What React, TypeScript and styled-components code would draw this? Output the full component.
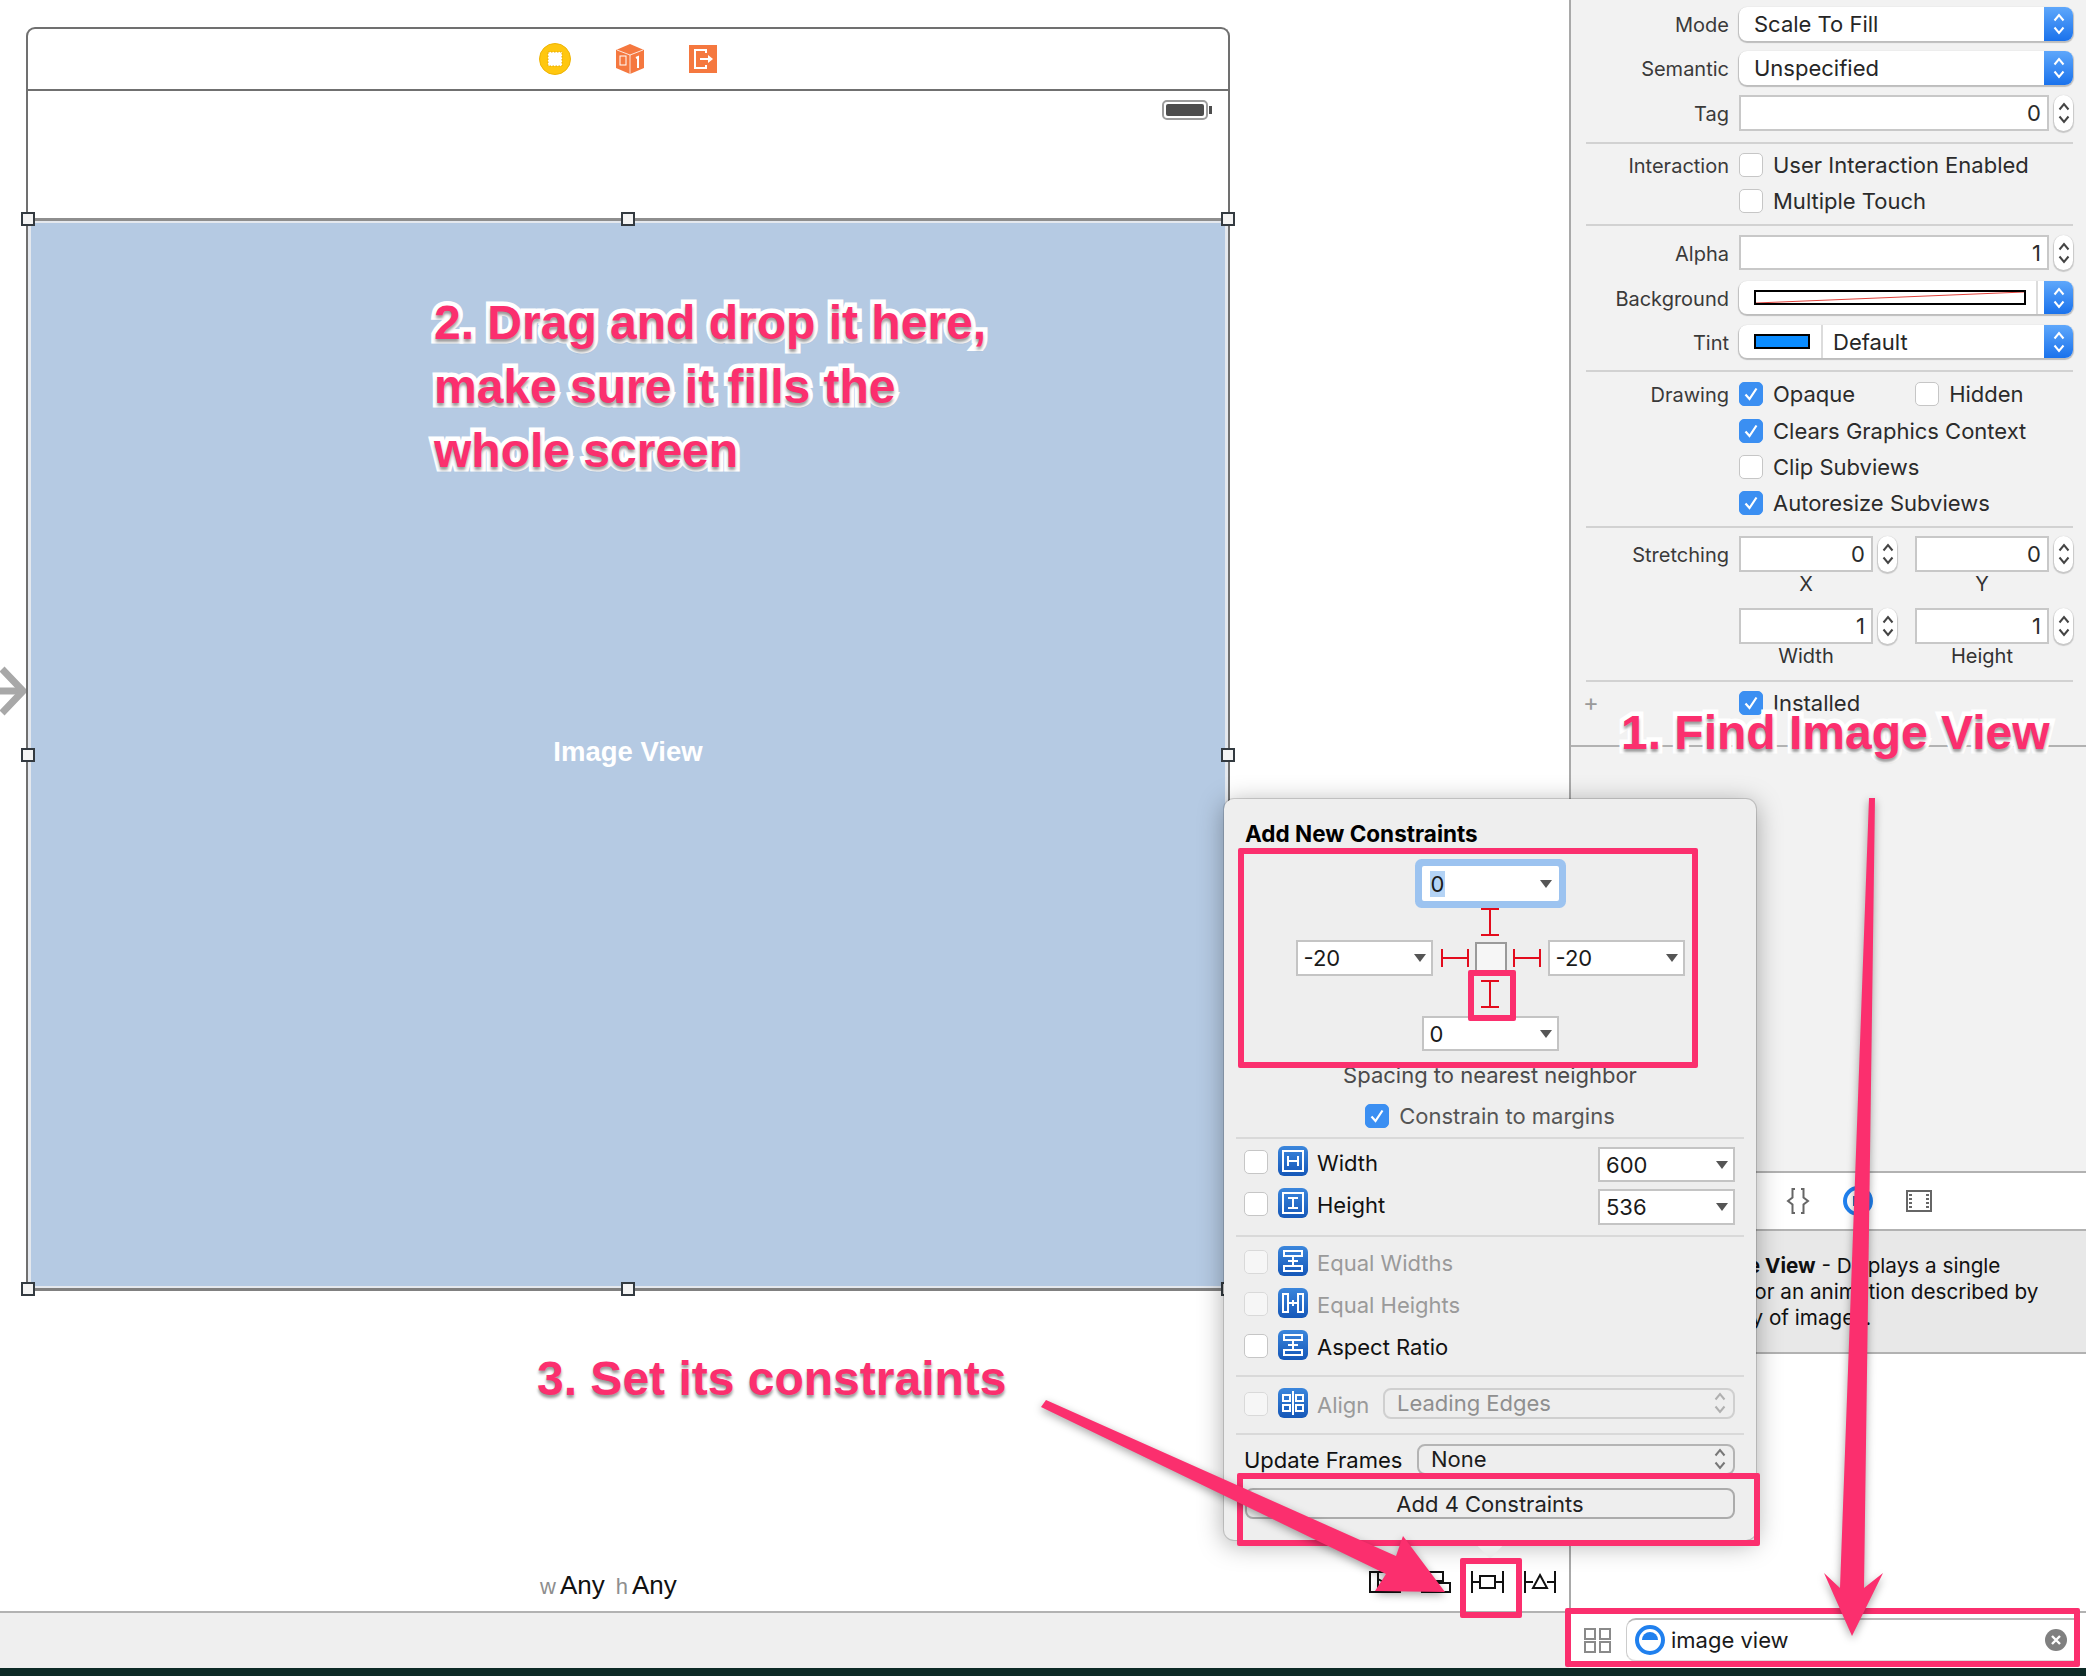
import React from "react";
import styled, { createGlobalStyle } from "styled-components";

const PINK = "#fb2f6e";
const UI_FONT = `Inter, "Liberation Sans", sans-serif`;

const GlobalStyle = createGlobalStyle`
  html, body {
    margin: 0;
    padding: 0;
    background: #ffffff;
  }
  body {
    font-family: ${UI_FONT};
    font-size: 22px;
    color: #2b2b2b;
  }
`;

const Page = styled.div`
  position: relative;
  width: 2086px;
  height: 1676px;
  overflow: hidden;
  display: flex;
  flex-direction: column;
`;

const Main = styled.div`
  display: flex;
  height: 1611px;
`;

/* storyboard canvas */
const Canvas = styled.div`
  position: relative;
  flex: 1;
  display: flex;
  flex-direction: column;
  padding: 27px 0 0 26px;
  background: #ffffff;
`;

const SegueArrow = styled.svg`
  position: absolute;
  left: 0;
  top: 666px;
`;

const Scene = styled.div`
  width: 1204px;
  height: 1264px;
  display: flex;
  flex-direction: column;
  box-sizing: border-box;
  border: 2px solid #707070;
  border-bottom: 0;
  border-radius: 9px 9px 0 0;
`;

const SceneHeader = styled.div`
  height: 60px;
  display: flex;
  align-items: center;
  justify-content: center;
  gap: 45px;
  border-bottom: 2px solid #707070;
`;

const StatusArea = styled.div`
  height: 127px;
  display: flex;
  justify-content: flex-end;
  padding: 9px 16px 0 0;
  box-sizing: border-box;
`;

const ImageView = styled.div`
  position: relative;
  flex: 1;
  display: flex;
  align-items: center;
  justify-content: center;
  background: #b5cae3;
  border-top: 3px solid #8e8e8e;
  border-bottom: 3px solid #808080;
  box-shadow: inset 3px 2px 0 #e4e8ee, inset -3px -2px 0 #e4e8ee;
  color: #ffffff;
  font-family: "Liberation Sans", sans-serif;
  font-weight: 700;
  font-size: 27.5px;
  padding-bottom: 6px;
  box-sizing: border-box;
`;

const Handle = styled.span<{ $h: "left" | "mid" | "right"; $v: "top" | "mid" | "bottom" }>`
  position: absolute;
  width: 10px;
  height: 10px;
  background: #f4f4f4;
  border: 2px solid #333a40;
  ${({ $h }) => ($h === "left" ? "left: -7px;" : $h === "right" ? "right: -7px;" : "left: calc(50% - 7px);")}
  ${({ $v }) => ($v === "top" ? "top: -9px;" : $v === "bottom" ? "bottom: -8px;" : "top: calc(50% - 7px);")}
`;

const CanvasToolbar = styled.div`
  position: absolute;
  left: 0;
  right: 0;
  bottom: 10px;
  display: flex;
  align-items: center;
  justify-content: space-between;
  padding: 0 13px 0 540px;
  font-family: "Liberation Sans", sans-serif;
`;

const SizeClass = styled.div`
  font-size: 26px;
  color: #111111;
  display: flex;
  gap: 11px;
  padding-top: 8px;
`;

const SizePrefix = styled.span`
  font-size: 22px;
  color: #8e8e8e;
  margin-right: 4px;
`;

const ToolIcons = styled.div`
  display: flex;
  align-items: center;
  gap: 20px;
`;

/* inspector */
const Inspector = styled.div`
  width: 517px;
  box-sizing: border-box;
  border-left: 2px solid #a9a9a9;
  display: flex;
  flex-direction: column;
  background: #f2f2f2;
`;

const InspectorTop = styled.div`
  height: 747px;
  box-sizing: border-box;
  padding-right: 13px;
  border-bottom: 2px solid #b2b2b2;
`;

const Section = styled.div<{ $top: number; $gap: number; $bottom: number; $last?: boolean }>`
  display: flex;
  flex-direction: column;
  gap: ${({ $gap }) => $gap}px;
  padding-top: ${({ $top }) => $top}px;
  padding-bottom: ${({ $bottom }) => $bottom}px;
  margin-left: 15px;
  border-bottom: ${({ $last }) => ($last ? "0" : "2px solid #d2d2d2")};
`;

const Row = styled.div`
  display: flex;
  align-items: center;
  position: relative;
`;

const RowLabel = styled.div`
  position: relative;
  top: 1px;
  width: 143px;
  margin-right: 10px;
  flex: none;
  text-align: right;
  color: #3a3a3a;
  font-size: 20px;
  line-height: 24px;
`;

const SelectBox = styled.div<{ $h?: number }>`
  flex: 1;
  height: ${({ $h }) => $h ?? 34}px;
  box-sizing: border-box;
  display: flex;
  align-items: center;
  background: #ffffff;
  border-radius: 8px;
  overflow: hidden;
  box-shadow: 0 1px 1px 1px rgba(0, 0, 0, 0.22);
  color: #262626;
`;

const SelectText = styled.div<{ $pad: number }>`
  flex: 1;
  padding-left: ${({ $pad }) => $pad}px;
`;

const BlueCap = styled.div`
  width: 29px;
  flex: none;
  height: 100%;
  display: flex;
  align-items: center;
  justify-content: center;
  background: linear-gradient(#5ea7fb, #1a72ec);
`;

const NumberField = styled.div<{ $w?: number; $h?: number }>`
  ${({ $w }) => ($w ? `width: ${$w}px; flex: none;` : "flex: 1;")}
  height: ${({ $h }) => $h ?? 36}px;
  box-sizing: border-box;
  background: #ffffff;
  border: 2px solid #c8c8c8;
  padding-right: 6px;
  text-align: right;
  line-height: ${({ $h }) => ($h ?? 36) - 3}px;
  color: #2b2b2b;
`;

const Stepper = styled.div`
  width: 19px;
  flex: none;
  align-self: stretch;
  margin-left: 5px;
  display: flex;
  align-items: center;
  justify-content: center;
  background: #ffffff;
  border-radius: 10px;
  box-shadow: 0 1px 1px 1px rgba(0, 0, 0, 0.18);
`;

const CheckRow = styled.div<{ $indent?: boolean }>`
  display: flex;
  align-items: center;
  gap: 10px;
  height: 24px;
  line-height: 24px;
  color: #2b2b2b;
  ${({ $indent }) => ($indent ? "margin-left: 153px;" : "")}
`;

const CheckBox = styled.div<{ $on?: boolean; $off?: boolean }>`
  width: 24px;
  height: 24px;
  flex: none;
  box-sizing: border-box;
  display: flex;
  align-items: center;
  justify-content: center;
  border-radius: 5px;
  background: ${({ $on }) => ($on ? "#3b8ff2" : "#ffffff")};
  border: 1px solid ${({ $on }) => ($on ? "#3b8ff2" : "#c6c6c6")};
  opacity: ${({ $off }) => ($off ? 0.5 : 1)};
`;

const DrawingExtra = styled.div`
  display: flex;
  align-items: center;
  gap: 10px;
  margin-left: 60px;
`;

const Swatch = styled.div<{ $w: number; $fill: string }>`
  width: ${({ $w }) => $w}px;
  height: 15px;
  flex: none;
  margin-left: 15px;
  box-sizing: border-box;
  border: 2px solid #000000;
  background: ${({ $fill }) => $fill};
`;

const Separator = styled.div<{ $ml: number }>`
  width: 2px;
  height: 100%;
  margin-left: ${({ $ml }) => $ml}px;
  background: #dcdcdc;
  flex: none;
`;

const PairRow = styled.div`
  display: flex;
  align-items: center;
`;

const PairCell = styled.div`
  width: 158px;
  display: flex;
  align-items: center;
  margin-right: 18px;
  &:last-child {
    margin-right: 0;
  }
`;

const PairLabel = styled.div`
  width: 134px;
  text-align: center;
  font-size: 20px;
  line-height: 24px;
  color: #333333;
`;

const PairLabels = styled.div<{ $mb: number }>`
  display: flex;
  gap: 42px;
  margin: 0 0 ${({ $mb }) => $mb}px 153px;
  height: 24px;
`;

const PlusMark = styled.div`
  position: absolute;
  left: -3px;
  top: 0;
  color: #9a9a9a;
  font-size: 24px;
  line-height: 24px;
`;

const TabStrip = styled.div`
  margin-top: 424px;
  height: 56px;
  flex: none;
  background: #ffffff;
  border-top: 2px solid #b2b2b2;
  border-bottom: 2px solid #b2b2b2;
  display: flex;
  align-items: center;
  padding-left: 215px;
  gap: 33px;
`;

const Description = styled.div`
  height: 123px;
  flex: none;
  box-sizing: border-box;
  background: #e8e8e8;
  border-bottom: 2px solid #b2b2b2;
  padding: 22px 0 0 112px;
  font-size: 20.7px;
  line-height: 26px;
  color: #111111;
  white-space: nowrap;
`;

const DescriptionLead = styled.span`
  margin-left: 15px;
`;

const Remaining = styled.div`
  flex: 1;
  background: #ffffff;
`;

/* bottom bars */
const BottomBar = styled.div`
  height: 57px;
  flex: none;
  box-sizing: border-box;
  display: flex;
  border-top: 2px solid #b2b2b2;
`;

const BarLeft = styled.div`
  flex: 1;
  background: #efefef;
`;

const BarRight = styled.div`
  width: 517px;
  flex: none;
  box-sizing: border-box;
  background: #ffffff;
  display: flex;
  align-items: flex-start;
  padding: 5px 8px 0 15px;
  gap: 15px;
`;

const GridIcon = styled.svg`
  margin-top: 10px;
  flex: none;
`;

const SearchField = styled.div`
  flex: 1;
  height: 44px;
  box-sizing: border-box;
  border-top: 2px solid #b8b8b8;
  border-left: 1px solid #cccccc;
  border-bottom: 2px solid #dddddd;
  border-radius: 10px 0 0 10px;
  display: flex;
  align-items: center;
  padding: 0 11px 0 8px;
  gap: 6px;
  color: #1a1a1a;
`;

const SearchText = styled.div`
  flex: 1;
`;

const DarkBand = styled.div`
  flex: 1;
  background: #0d2a26;
`;

/* constraints popover */
const Popover = styled.div`
  position: absolute;
  left: 1224px;
  top: 799px;
  width: 532px;
  height: 741px;
  box-sizing: border-box;
  display: flex;
  flex-direction: column;
  background: #eeeeee;
  border-radius: 10px;
  box-shadow: 0 0 0 1px rgba(0, 0, 0, 0.14), 0 4px 26px rgba(0, 0, 0, 0.34);
  padding: 22px 12px 0;
  color: #111111;
`;

const PopoverTip = styled.div`
  position: absolute;
  left: 248px;
  bottom: -19px;
  width: 0;
  height: 0;
  border-left: 18px solid transparent;
  border-right: 18px solid transparent;
  border-top: 19px solid #ececec;
`;

const PopoverTitle = styled.div`
  font-weight: 700;
  font-size: 22.5px;
  line-height: 26px;
  padding-left: 9px;
  color: #000000;
`;

const PinPad = styled.div`
  display: flex;
  flex-direction: column;
  align-items: center;
  margin-top: 19px;
`;

const PinSelect = styled.div<{ $focus?: boolean; $h?: number }>`
  width: 137px;
  height: ${({ $h }) => $h ?? 35}px;
  flex: none;
  box-sizing: border-box;
  display: flex;
  align-items: center;
  justify-content: space-between;
  padding: 0 5px 0 6px;
  background: #ffffff;
  border: 2px solid ${({ $focus }) => ($focus ? "#ffffff" : "#c4c4c4")};
  color: #1a1a1a;
  ${({ $focus }) => ($focus ? "box-shadow: 0 0 0 7px #9cc3f0; border-radius: 2px;" : "")}
`;

const PinValue = styled.span<{ $selected?: boolean }>`
  background: ${({ $selected }) => ($selected ? "#b4d3f5" : "transparent")};
  padding: 0 1px;
`;

const Caret = styled.span`
  width: 0;
  height: 0;
  border-left: 6px solid transparent;
  border-right: 6px solid transparent;
  border-top: 8px solid #555555;
`;

const PinMiddle = styled.div`
  display: flex;
  align-items: center;
  margin: 4px 0;
`;

const Strut = styled.svg<{ $mt: number; $mb: number }>`
  display: block;
  margin-top: ${({ $mt }) => $mt}px;
  margin-bottom: ${({ $mb }) => $mb}px;
`;

const BeamGap = styled.span<{ $w: number }>`
  width: ${({ $w }) => $w}px;
`;

const PinSquare = styled.div`
  width: 32px;
  height: 33px;
  box-sizing: border-box;
  margin: 0 6px;
  background: #f6f6f6;
  border: 2px solid #9a9a9a;
`;

const HintText = styled.div`
  margin-top: 11px;
  line-height: 26px;
  text-align: center;
  color: #4a4a4a;
`;

const ConstrainRow = styled.div`
  margin-top: 16px;
  height: 24px;
  display: flex;
  align-items: center;
  justify-content: center;
  gap: 10px;
  color: #555555;
`;

const PopDivider = styled.div<{ $mt: number }>`
  height: 2px;
  flex: none;
  margin-top: ${({ $mt }) => $mt}px;
  background: #d9d9d9;
`;

const PopRow = styled.div<{ $mt: number }>`
  height: 30px;
  flex: none;
  margin-top: ${({ $mt }) => $mt}px;
  display: flex;
  align-items: center;
  padding: 0 9px 0 8px;
  & > :first-child {
    margin-top: 2px;
  }
`;

const PopLabel = styled.div<{ $dim?: boolean; $fixed?: boolean }>`
  margin-left: 9px;
  padding-top: 3px;
  flex: ${({ $fixed }) => ($fixed ? "none" : "1")};
  color: ${({ $dim }) => ($dim ? "#9a9a9a" : "#111111")};
`;

const RowIcon = styled.svg`
  margin-left: 10px;
  flex: none;
`;

const SizeSelectWrap = styled.div`
  align-self: flex-start;
  margin-top: 1px;
`;

const PopUpButton = styled.div<{ $w: number; $dim?: boolean }>`
  width: ${({ $w }) => $w}px;
  height: 31px;
  flex: none;
  margin-left: auto;
  box-sizing: border-box;
  display: flex;
  align-items: center;
  justify-content: space-between;
  padding: 0 6px 0 12px;
  border: 2px solid ${({ $dim }) => ($dim ? "#cfcfcf" : "#b4b4b4")};
  border-radius: 8px;
  color: ${({ $dim }) => ($dim ? "#8f8f8f" : "#1c1c1c")};
`;

const UpdateLabel = styled.div`
  flex: none;
`;

const AddButton = styled.div`
  margin: 14px 9px 0;
  height: 31px;
  flex: none;
  box-sizing: border-box;
  border: 2px solid #ababab;
  border-radius: 8px;
  display: flex;
  align-items: center;
  justify-content: center;
  color: #222222;
`;

/* annotations drawn over the screenshot */
const Callout = styled.div<{ $x: number; $y: number }>`
  position: absolute;
  left: ${({ $x }) => $x}px;
  top: ${({ $y }) => $y}px;
  font-family: "Liberation Sans", sans-serif;
  font-weight: 700;
  font-size: 48px;
  line-height: 64px;
  white-space: nowrap;
  color: ${PINK};
  -webkit-text-stroke: 9px #ffffff;
  paint-order: stroke fill;
  text-shadow: 0 3px 3px rgba(0, 0, 0, 0.4);
`;

const PinkFrame = styled.div<{ $x: number; $y: number; $w: number; $h: number }>`
  position: absolute;
  left: ${({ $x }) => $x}px;
  top: ${({ $y }) => $y}px;
  width: ${({ $w }) => $w}px;
  height: ${({ $h }) => $h}px;
  box-sizing: border-box;
  border: 6px solid ${PINK};
  border-radius: 2px;
`;

const ArrowLayer = styled.svg`
  position: absolute;
  left: 0;
  top: 0;
  pointer-events: none;
  filter: drop-shadow(0 3px 4px rgba(0, 0, 0, 0.35));
`;

const Chevrons = ({ color }: { color: string }) => (
  <svg width="14" height="26" viewBox="0 0 14 26" fill="none" stroke={color} strokeWidth={2}>
    <path d="M2.5 9.5 7 4l4.5 5.5" />
    <path d="M2.5 16.5 7 22l4.5-5.5" />
  </svg>
);

const Check = () => (
  <svg width="16" height="16" viewBox="0 0 16 16" fill="none" stroke="#ffffff" strokeWidth={2.2}>
    <path d="M2.5 8.5 6.5 13 13.5 2.5" />
  </svg>
);

const Box = ({ on, off }: { on?: boolean; off?: boolean }) => (
  <CheckBox $on={on} $off={off}>{on && <Check />}</CheckBox>
);

const IconBase = ({ children }: { children: React.ReactNode }) => (
  <RowIcon width="30" height="30" viewBox="0 0 30 30" fill="none" stroke="#ffffff" strokeWidth={2}>
    <defs>
      <linearGradient id="blueIcon" x1="0" y1="0" x2="0" y2="1">
        <stop offset="0" stopColor="#3b86dc" />
        <stop offset="1" stopColor="#1557b8" />
      </linearGradient>
    </defs>
    <rect x="0" y="0" width="30" height="30" rx="6" fill="url(#blueIcon)" stroke="none" />
    {children}
  </RowIcon>
);

const WidthIcon = () => (
  <IconBase>
    <rect x="5" y="5" width="20" height="20" />
    <path d="M10 10v10M20 10v10M10 15h10" />
  </IconBase>
);
const HeightIcon = () => (
  <IconBase>
    <rect x="5" y="5" width="20" height="20" />
    <path d="M10 10h10M10 20h10M15 10v10" />
  </IconBase>
);
const EqualWidthsIcon = () => (
  <IconBase>
    <rect x="6" y="5" width="18" height="5" />
    <rect x="6" y="20" width="18" height="5" />
    <path d="M15 10v10M10 15h10" />
  </IconBase>
);
const EqualHeightsIcon = () => (
  <IconBase>
    <rect x="5" y="6" width="5" height="18" />
    <rect x="20" y="6" width="5" height="18" />
    <path d="M10 15h10M15 12v6" />
  </IconBase>
);
const AlignIcon = () => (
  <IconBase>
    <path d="M15 3v24" />
    <rect x="5" y="7" width="7" height="6" />
    <rect x="18" y="7" width="7" height="6" />
    <rect x="5" y="17" width="7" height="6" />
    <rect x="18" y="17" width="7" height="6" />
  </IconBase>
);

const HBeam = () => (
  <svg width="28" height="20" viewBox="0 0 28 20" stroke="#e30b1c" strokeWidth={2} fill="none">
    <path d="M1 1v18M27 1v18M1 10h26" />
  </svg>
);

const VBeam = ({ mt, mb }: { mt: number; mb: number }) => (
  <Strut $mt={mt} $mb={mb} width="20" height="28" viewBox="0 0 20 28" stroke="#e30b1c" strokeWidth={2} fill="none">
    <path d="M1 1h18M1 27h18M10 1v26" />
  </Strut>
);

const StoryIcons = () => (
  <>
    <svg width="32" height="32" viewBox="0 0 32 32">
      <circle cx="16" cy="16" r="15.5" fill="#ffc70f" stroke="#eeb405" />
      <rect x="9" y="9" width="14" height="14" fill="#ffffff" stroke="#e5a800" strokeDasharray="1.5 1.5" />
    </svg>
    <svg width="28" height="30" viewBox="0 0 28 30">
      <path d="M14 0 28 6v18L14 30 0 24V6Z" fill="#f5783f" />
      <path d="M14 11 27 6M14 11 1 6M14 11v19" stroke="#ffffff" strokeWidth="0.8" fill="none" />
      <rect x="4" y="12" width="6" height="9" fill="none" stroke="#ffffff" strokeWidth="1" />
      <path d="M20 14l2-1v11" stroke="#ffffff" strokeWidth="2" fill="none" />
    </svg>
    <svg width="28" height="28" viewBox="0 0 28 28">
      <rect width="28" height="28" fill="#f5783f" />
      <path d="M17 8V5H6v18h11v-3" stroke="#ffffff" strokeWidth="2" fill="none" />
      <path d="M11 14h9" stroke="#ffffff" strokeWidth="2" />
      <path d="M19 10l5 4-5 4Z" fill="#ffffff" />
    </svg>
  </>
);

const Battery = () => (
  <svg width="50" height="20" viewBox="0 0 50 20">
    <rect x="1" y="1" width="44" height="18" rx="4" fill="#ffffff" stroke="#9c9c9c" strokeWidth="2" />
    <rect x="4" y="4" width="38" height="12" rx="2" fill="#4d4d4d" />
    <rect x="47" y="6" width="3" height="8" fill="#4d4d4d" />
  </svg>
);

const ToolIcon = ({ children, w }: { children: React.ReactNode; w: number }) => (
  <svg width={w} height="22" viewBox={`0 0 ${w} 22`} stroke="#111111" strokeWidth={2} fill="none">
    {children}
  </svg>
);

const App = () => (
  <Page>
    <GlobalStyle />
    <Main>
      <Canvas>
        <SegueArrow width="26" height="50" viewBox="0 0 26 50" fill="none" stroke="#a8a8a8">
          <path d="M0 25h22" strokeWidth="7" />
          <path d="M2 3 23 25 2 47" strokeWidth="7" />
        </SegueArrow>
        <Scene>
          <SceneHeader>
            <StoryIcons />
          </SceneHeader>
          <StatusArea>
            <Battery />
          </StatusArea>
          <ImageView>
            Image View
            <Handle $h="left" $v="top" />
            <Handle $h="mid" $v="top" />
            <Handle $h="right" $v="top" />
            <Handle $h="left" $v="mid" />
            <Handle $h="right" $v="mid" />
            <Handle $h="left" $v="bottom" />
            <Handle $h="mid" $v="bottom" />
            <Handle $h="right" $v="bottom" />
          </ImageView>
        </Scene>
        <CanvasToolbar>
          <SizeClass>
            <span><SizePrefix>w</SizePrefix>Any</span>
            <span><SizePrefix>h</SizePrefix>Any</span>
          </SizeClass>
          <ToolIcons>
            <ToolIcon w={32}>
              <rect x="1" y="1" width="30" height="20" />
              <path d="M9 1v20M9 8l9 5-9 5" />
            </ToolIcon>
            <ToolIcon w={30}>
              <rect x="8" y="1" width="14" height="9" />
              <rect x="1" y="12" width="28" height="9" />
            </ToolIcon>
            <ToolIcon w={33}>
              <path d="M1 0v22M32 0v22M1 11h8M24 11h8" />
              <rect x="9" y="5" width="15" height="12" />
            </ToolIcon>
            <ToolIcon w={32}>
              <path d="M1 0v22M31 0v22M1 11h8M23 11h8" />
              <path d="M16 4l7 13H9Z" />
            </ToolIcon>
          </ToolIcons>
        </CanvasToolbar>
      </Canvas>

      <Inspector>
        <InspectorTop>
          <Section $top={7} $gap={10} $bottom={11}>
            <Row>
              <RowLabel>Mode</RowLabel>
              <SelectBox>
                <SelectText $pad={15}>Scale To Fill</SelectText>
                <BlueCap><Chevrons color="#ffffff" /></BlueCap>
              </SelectBox>
            </Row>
            <Row>
              <RowLabel>Semantic</RowLabel>
              <SelectBox>
                <SelectText $pad={15}>Unspecified</SelectText>
                <BlueCap><Chevrons color="#ffffff" /></BlueCap>
              </SelectBox>
            </Row>
            <Row>
              <RowLabel>Tag</RowLabel>
              <NumberField>0</NumberField>
              <Stepper><Chevrons color="#444444" /></Stepper>
            </Row>
          </Section>
          <Section $top={9} $gap={12} $bottom={11}>
            <Row>
              <RowLabel>Interaction</RowLabel>
              <CheckRow><Box />User Interaction Enabled</CheckRow>
            </Row>
            <CheckRow $indent><Box />Multiple Touch</CheckRow>
          </Section>
          <Section $top={9} $gap={11} $bottom={12}>
            <Row>
              <RowLabel>Alpha</RowLabel>
              <NumberField $h={35}>1</NumberField>
              <Stepper><Chevrons color="#444444" /></Stepper>
            </Row>
            <Row>
              <RowLabel>Background</RowLabel>
              <SelectBox $h={33}>
                <Swatch
                  $w={272}
                  $fill="linear-gradient(to bottom right, transparent calc(50% - 1px), #e0413a 50%, transparent calc(50% + 1px)), #ffffff"
                />
                <Separator $ml={10} />
                <SelectText $pad={0} />
                <BlueCap><Chevrons color="#ffffff" /></BlueCap>
              </SelectBox>
            </Row>
            <Row>
              <RowLabel>Tint</RowLabel>
              <SelectBox $h={33}>
                <Swatch $w={56} $fill="#0a8cff" />
                <Separator $ml={11} />
                <SelectText $pad={10}>Default</SelectText>
                <BlueCap><Chevrons color="#ffffff" /></BlueCap>
              </SelectBox>
            </Row>
          </Section>
          <Section $top={9} $gap={12} $bottom={11}>
            <Row>
              <RowLabel>Drawing</RowLabel>
              <CheckRow><Box on />Opaque</CheckRow>
              <DrawingExtra><Box />Hidden</DrawingExtra>
            </Row>
            <CheckRow $indent><Box on />Clears Graphics Context</CheckRow>
            <CheckRow $indent><Box />Clip Subviews</CheckRow>
            <CheckRow $indent><Box on />Autoresize Subviews</CheckRow>
          </Section>
          <Section $top={8} $gap={0} $bottom={12}>
            <PairRow>
              <RowLabel>Stretching</RowLabel>
              <PairCell><NumberField $w={134}>0</NumberField><Stepper><Chevrons color="#444444" /></Stepper></PairCell>
              <PairCell><NumberField $w={134}>0</NumberField><Stepper><Chevrons color="#444444" /></Stepper></PairCell>
            </PairRow>
            <PairLabels $mb={12}><PairLabel>X</PairLabel><PairLabel>Y</PairLabel></PairLabels>
            <PairRow>
              <RowLabel />
              <PairCell><NumberField $w={134}>1</NumberField><Stepper><Chevrons color="#444444" /></Stepper></PairCell>
              <PairCell><NumberField $w={134}>1</NumberField><Stepper><Chevrons color="#444444" /></Stepper></PairCell>
            </PairRow>
            <PairLabels $mb={0}><PairLabel>Width</PairLabel><PairLabel>Height</PairLabel></PairLabels>
          </Section>
          <Section $top={9} $gap={0} $bottom={0} $last>
            <Row>
              <PlusMark>+</PlusMark>
              <CheckRow $indent><Box on />Installed</CheckRow>
            </Row>
          </Section>
        </InspectorTop>

        <TabStrip>
          <svg width="24" height="26" viewBox="0 0 24 26" fill="none" stroke="#666666" strokeWidth="2">
            <path d="M9 1H6.5v8.5L2 13l4.5 3.5V25H9M15 1h2.5v8.5L22 13l-4.5 3.5V25H15" />
          </svg>
          <svg width="30" height="30" viewBox="0 0 30 30" fill="none">
            <circle cx="15" cy="15" r="13" stroke="#2080ee" strokeWidth="4" />
            <rect x="10" y="10" width="10" height="10" fill="#3a6fb0" />
          </svg>
          <svg width="26" height="22" viewBox="0 0 26 22" fill="none" stroke="#666666" strokeWidth="2">
            <rect x="1" y="1" width="24" height="20" />
            <path d="M3 5h3M3 9h3M3 13h3M3 17h3M20 5h3M20 9h3M20 13h3M20 17h3" />
          </svg>
        </TabStrip>
        <Description>
          <DescriptionLead><b>Image View</b> - Displays a single</DescriptionLead><br />
          image, or an animation described by<br />
          an array of images.
        </Description>
        <Remaining />
      </Inspector>
    </Main>

    <BottomBar>
      <BarLeft />
      <BarRight>
        <GridIcon width="27" height="25" viewBox="0 0 27 25" fill="none" stroke="#8a8a8a" strokeWidth="2">
          <rect x="1" y="1" width="10" height="10" />
          <rect x="16" y="1" width="10" height="10" />
          <rect x="1" y="14" width="10" height="10" />
          <rect x="16" y="14" width="10" height="10" />
        </GridIcon>
        <SearchField>
          <svg width="30" height="30" viewBox="0 0 30 30">
            <circle cx="15" cy="15" r="13" fill="#ffffff" stroke="#2080ee" strokeWidth="4" />
            <path d="M7 15a8 8 0 0 1 16 0Z" fill="#2080ee" />
          </svg>
          <SearchText>image view</SearchText>
          <svg width="22" height="22" viewBox="0 0 22 22">
            <circle cx="11" cy="11" r="11" fill="#808080" />
            <path d="M7 7l8 8M15 7l-8 8" stroke="#ffffff" strokeWidth="2.4" />
          </svg>
        </SearchField>
      </BarRight>
    </BottomBar>
    <DarkBand />

    <Popover>
      <PopoverTitle>Add New Constraints</PopoverTitle>
      <PinPad>
        <PinSelect $focus>
          <PinValue $selected>0</PinValue>
          <Caret />
        </PinSelect>
        <VBeam mt={7} mb={0} />
        <PinMiddle>
          <PinSelect $h={36}>-20<Caret /></PinSelect>
          <BeamGap $w={8} />
          <HBeam />
          <PinSquare />
          <HBeam />
          <BeamGap $w={7} />
          <PinSelect $h={36}>-20<Caret /></PinSelect>
        </PinMiddle>
        <VBeam mt={0} mb={8} />
        <PinSelect>0<Caret /></PinSelect>
      </PinPad>
      <HintText>Spacing to nearest neighbor</HintText>
      <ConstrainRow><Box on />Constrain to margins</ConstrainRow>
      <PopDivider $mt={9} />
      <PopRow $mt={7}>
        <Box /><WidthIcon /><PopLabel>Width</PopLabel>
        <SizeSelectWrap><PinSelect>600<Caret /></PinSelect></SizeSelectWrap>
      </PopRow>
      <PopRow $mt={12}>
        <Box /><HeightIcon /><PopLabel>Height</PopLabel>
        <SizeSelectWrap><PinSelect $h={36}>536<Caret /></PinSelect></SizeSelectWrap>
      </PopRow>
      <PopDivider $mt={17} />
      <PopRow $mt={9}><Box off /><EqualWidthsIcon /><PopLabel $dim>Equal Widths</PopLabel></PopRow>
      <PopRow $mt={12}><Box off /><EqualHeightsIcon /><PopLabel $dim>Equal Heights</PopLabel></PopRow>
      <PopRow $mt={12}><Box /><EqualWidthsIcon /><PopLabel>Aspect Ratio</PopLabel></PopRow>
      <PopDivider $mt={15} />
      <PopRow $mt={11}>
        <Box off /><AlignIcon /><PopLabel $dim $fixed>Align</PopLabel>
        <PopUpButton $w={352} $dim>Leading Edges<Chevrons color="#b0b0b0" /></PopUpButton>
      </PopRow>
      <PopDivider $mt={15} />
      <PopRow $mt={9}>
        <UpdateLabel>Update Frames</UpdateLabel>
        <PopUpButton $w={318}>None<Chevrons color="#777777" /></PopUpButton>
      </PopRow>
      <AddButton>Add 4 Constraints</AddButton>
      <PopoverTip />
    </Popover>

    <PinkFrame $x={1238} $y={848} $w={460} $h={220} />
    <PinkFrame $x={1468} $y={970} $w={48} $h={51} />
    <PinkFrame $x={1237} $y={1473} $w={523} $h={73} />
    <PinkFrame $x={1460} $y={1558} $w={62} $h={60} />
    <PinkFrame $x={1565} $y={1608} $w={515} $h={59} />

    <ArrowLayer width="2086" height="1676" viewBox="0 0 2086 1676" fill={PINK}>
      <polygon points="1869,798 1875,798 1864,1588 1883,1573 1852,1636 1824,1573 1840,1588" />
      <polygon points="1046,1400 1396,1556 1403,1536 1445,1592 1375,1591 1386,1574 1041,1407" />
    </ArrowLayer>

    <Callout $x={434} $y={291}>
      2. Drag and drop it here,<br />
      make sure it fills the<br />
      whole screen
    </Callout>
    <Callout $x={1621} $y={701}>1. Find Image View</Callout>
    <Callout $x={537} $y={1347}>3. Set its constraints</Callout>
  </Page>
);

export default App;
